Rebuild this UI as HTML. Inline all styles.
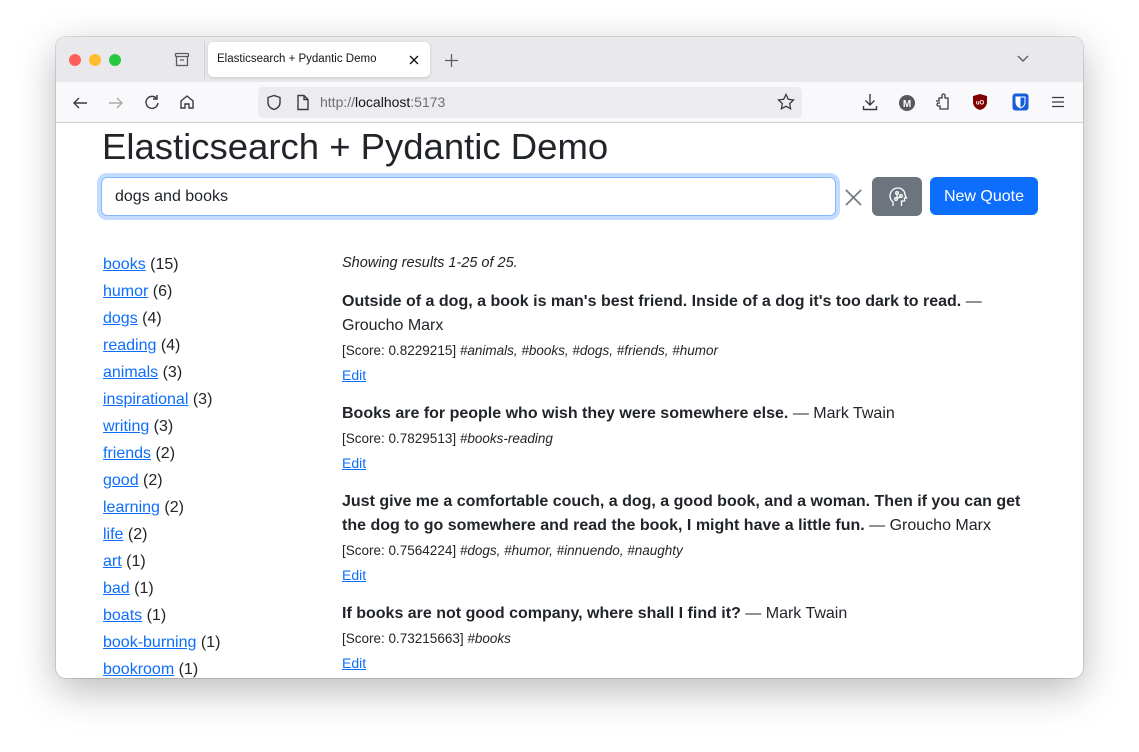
<!DOCTYPE html>
<html><head><meta charset="utf-8"><style>
*{box-sizing:border-box;margin:0;padding:0}
body{width:1139px;height:752px;background:#fff;font-family:"Liberation Sans",sans-serif;position:relative;overflow:hidden;color:#212529}
.win{position:absolute;left:56px;top:37px;width:1027px;height:641px;border-radius:10px;overflow:hidden;background:#fff;box-shadow:0 12px 40px rgba(0,0,0,.28),0 0 0 1px rgba(0,0,0,.12)}
.tabbar{position:absolute;left:0;top:0;width:100%;height:45px;background:#e9e9ed}
.toolbar{position:absolute;left:0;top:45px;width:100%;height:41px;background:#f9f9fb;border-bottom:1px solid #d0d0d4}
.dot{position:absolute;top:17px;width:12px;height:12px;border-radius:50%}
.tab{position:absolute;left:152px;top:5px;width:222px;height:35px;background:#fff;border-radius:5px;box-shadow:0 1px 3px rgba(0,0,0,.15);font-size:11.5px;line-height:35px;padding-left:9px;color:#15141a}
.url{position:absolute;left:202px;top:5px;width:544px;height:31px;background:#ececef;border-radius:5px;font-size:14px;line-height:31px;padding-left:62px;color:#6e6e73}
.url b{font-weight:normal;color:#15141a}
svg{position:absolute}
a{color:#0d6efd;text-decoration:underline}
.abs{position:absolute}
h1{position:absolute;left:46px;top:90px;font-size:36.5px;font-weight:500;line-height:42px;color:#212529}
.inp{position:absolute;left:45px;top:140px;width:735px;height:39px;border:1px solid #86b7fe;border-radius:6px;box-shadow:0 0 0 4px rgba(13,110,253,.25);font-size:16px;line-height:37px;padding-left:13px}
.btn1{position:absolute;left:816px;top:140px;width:50px;height:39px;background:#6c757d;border-radius:6px}
.btn2{position:absolute;left:874px;top:140px;width:108px;height:38px;background:#0d6efd;border-radius:6px;color:#fff;font-size:16px;line-height:38px;text-align:center}
.side{position:absolute;left:47px;top:215px;font-size:16px;line-height:27px}
.res{position:absolute;left:286px;top:214px;width:700px;font-size:16px;line-height:24px}
.q{font-weight:bold}
.sc{font-size:13.5px;line-height:24px;margin-top:1px}
.sc i{color:#212529}
.ed{font-size:14px;line-height:24px;display:block;margin-bottom:15px}
</style></head><body>
<div class="win">
 <div class="tabbar">
  <div class="dot" style="left:13px;background:#fe5f57"></div>
  <div class="dot" style="left:33px;background:#febc2e"></div>
  <div class="dot" style="left:53px;background:#28c840"></div>
  <svg style="left:118px;top:15px" width="16" height="16" viewBox="0 0 16 16" fill="none" stroke="#5b5b66" stroke-width="1.3"><rect x="1.5" y="1.5" width="13" height="3" rx="1"/><path d="M2.5 4.5v9h11v-9M6 8h4"/></svg>
  <div style="position:absolute;left:148px;top:4px;width:1px;height:38px;background:#cfcfd8"></div>
  <div class="tab">Elasticsearch + Pydantic Demo<svg style="right:11px;top:13px" width="10" height="10" viewBox="0 0 10 10" stroke="#15141a" stroke-width="1.4"><path d="M1 1l8 8M9 1L1 9"/></svg></div>
  <svg style="left:389px;top:17px" width="13" height="13" viewBox="0 0 13 13" stroke="#5b5b66" stroke-width="1.3"><path d="M6.5 0v13M0 6.5h13"/></svg>
  <svg style="left:960px;top:17px" width="14" height="10" viewBox="0 0 14 10" fill="none" stroke="#5b5b66" stroke-width="1.4"><path d="M2 2l5 5 5-5"/></svg>
 </div>
 <div class="toolbar">
  <svg style="left:16px;top:13px" width="16" height="16" viewBox="0 0 16 16" fill="none" stroke="#3a3a40" stroke-width="1.4"><path d="M15 8H2M7 3L2 8l5 5"/></svg>
  <svg style="left:52px;top:13px" width="16" height="16" viewBox="0 0 16 16" fill="none" stroke="#aaa" stroke-width="1.4"><path d="M1 8h13M9 3l5 5-5 5"/></svg>
  <svg style="left:88px;top:12px" width="16" height="16" viewBox="0 0 16 16" fill="none" stroke="#3a3a40" stroke-width="1.4"><path d="M13 5A6 6 0 1 0 14 9M13 1v4h-4"/></svg>
  <svg style="left:123px;top:12px" width="16" height="16" viewBox="0 0 16 16" fill="none" stroke="#3a3a40" stroke-width="1.4"><path d="M2 7l6-5 6 5v7H10v-4H6v4H2z"/></svg>
  <div class="url"><b style="color:#6e6e73">http://</b><b>localhost</b>:5173</div>
  <svg style="left:210px;top:12px" width="16" height="17" viewBox="0 0 16 17" fill="none" stroke="#3a3a40" stroke-width="1.4"><path d="M8 1.5L2 3.5v5c0 4 3 6 6 7 3-1 6-3 6-7v-5z"/></svg>
  <svg style="left:240px;top:12px" width="14" height="17" viewBox="0 0 14 17" fill="none" stroke="#3a3a40" stroke-width="1.4"><path d="M2 1.5h6l4 4v10H2z M8 1.5v4h4"/></svg>
  <svg style="left:721px;top:11px" width="18" height="18" viewBox="0 0 18 18" fill="none" stroke="#3a3a40" stroke-width="1.3"><path d="M9 1.5l2.3 4.8 5.2.7-3.8 3.6.9 5.2L9 13.3l-4.6 2.5.9-5.2L1.5 7l5.2-.7z"/></svg>
  <svg style="left:806px;top:11px" width="16" height="18" viewBox="0 0 16 18" fill="none" stroke="#3a3a40" stroke-width="1.4"><path d="M8 1v11M3.5 7.5L8 12l4.5-4.5M1.5 13v3.5h13V13"/></svg>
  <svg style="left:842px;top:12px" width="18" height="18" viewBox="0 0 18 18"><circle cx="9" cy="9" r="8" fill="#57575f"/><text x="9" y="13" font-size="10" font-weight="bold" fill="#fff" text-anchor="middle" font-family="Liberation Sans">M</text></svg>
  <svg style="left:878px;top:11px" width="17" height="18" viewBox="0 0 17 18" fill="none" stroke="#3a3a40" stroke-width="1.3"><path d="M2 8h3V5h3V2.5a1.5 1.5 0 0 1 3 0V5h3v11H6v-3H4.5a1.5 1.5 0 0 1 0-3H6"/></svg>
  <svg style="left:916px;top:11px" width="16" height="18" viewBox="0 0 16 18"><path d="M8 1l7 2v6c0 4-3 7-7 8-4-1-7-4-7-8V3z" fill="#800000"/><text x="8" y="11.5" font-size="6" font-weight="bold" fill="#fff" text-anchor="middle" font-family="Liberation Sans">uO</text></svg>
  <svg style="left:956px;top:11px" width="17" height="18" viewBox="0 0 17 18"><rect x="0.5" y="0.5" width="16" height="17" rx="3" fill="#175ddc"/><path d="M3.5 3.5h10v6c0 3-2.5 5-5 6-2.5-1-5-3-5-6z" fill="#fff"/><path d="M8.5 4.5h4v5c0 2.5-2 4-4 5z" fill="#175ddc"/></svg>
  <svg style="left:995px;top:14px" width="14" height="12" viewBox="0 0 14 12" fill="none" stroke="#3a3a40" stroke-width="1.3"><path d="M1 1.5h12M1 6h12M1 10.5h12"/></svg>
 </div>
 <div class="abs" style="left:0;top:86px;width:100%;height:555px;overflow:hidden">
  <h1 style="top:3px">Elasticsearch + Pydantic Demo</h1>
  <div class="inp" style="top:54px">dogs and books</div>
  <svg style="left:789px;top:66px" width="17" height="17" viewBox="0 0 18 18" stroke="#6c757d" stroke-width="1.8"><path d="M1 1l16 16M17 1L1 17"/></svg>
  <div class="btn1" style="top:54px"><svg style="left:14px;top:9px" width="22" height="22" viewBox="0 0 22 22" fill="none" stroke="#fff" stroke-width="1.3"><path d="M7 20v-4c-2-1.5-3-3.5-3-6 0-4.5 3.5-8 8-8 4 0 7 3 7 7l1.5 3h-2v3h-3v5"/><circle cx="11" cy="7" r="1.3"/><circle cx="15" cy="10" r="1.3"/><circle cx="10" cy="13" r="1.3"/><path d="M11 8.3v3.5M14 11l-3 1.5"/></svg></div>
  <div class="btn2" style="top:54px;line-height:39px">New Quote</div>
  <div class="side" style="top:128px">
   <div><a>books</a> (15)</div><div><a>humor</a> (6)</div><div><a>dogs</a> (4)</div><div><a>reading</a> (4)</div><div><a>animals</a> (3)</div><div><a>inspirational</a> (3)</div><div><a>writing</a> (3)</div><div><a>friends</a> (2)</div><div><a>good</a> (2)</div><div><a>learning</a> (2)</div><div><a>life</a> (2)</div><div><a>art</a> (1)</div><div><a>bad</a> (1)</div><div><a>boats</a> (1)</div><div><a>book-burning</a> (1)</div><div><a>bookroom</a> (1)</div>
  </div>
  <div class="res" style="top:128px">
   <div style="font-style:italic;font-size:14.5px;line-height:24px;margin-bottom:15px">Showing results 1-25 of 25.</div>
   <div><span class="q">Outside of a dog, a book is man's best friend. Inside of a dog it's too dark to read.</span> — Groucho Marx</div>
   <div class="sc">[Score: 0.8229215] <i>#animals, #books, #dogs, #friends, #humor</i></div>
   <a class="ed">Edit</a>
   <div><span class="q">Books are for people who wish they were somewhere else.</span> — Mark Twain</div>
   <div class="sc">[Score: 0.7829513] <i>#books-reading</i></div>
   <a class="ed">Edit</a>
   <div><span class="q">Just give me a comfortable couch, a dog, a good book, and a woman. Then if you can get the dog to go somewhere and read the book, I might have a little fun.</span> — Groucho Marx</div>
   <div class="sc">[Score: 0.7564224] <i>#dogs, #humor, #innuendo, #naughty</i></div>
   <a class="ed">Edit</a>
   <div><span class="q">If books are not good company, where shall I find it?</span> — Mark Twain</div>
   <div class="sc">[Score: 0.73215663] <i>#books</i></div>
   <a class="ed">Edit</a>
  </div>
 </div>
</div>
</body></html>
